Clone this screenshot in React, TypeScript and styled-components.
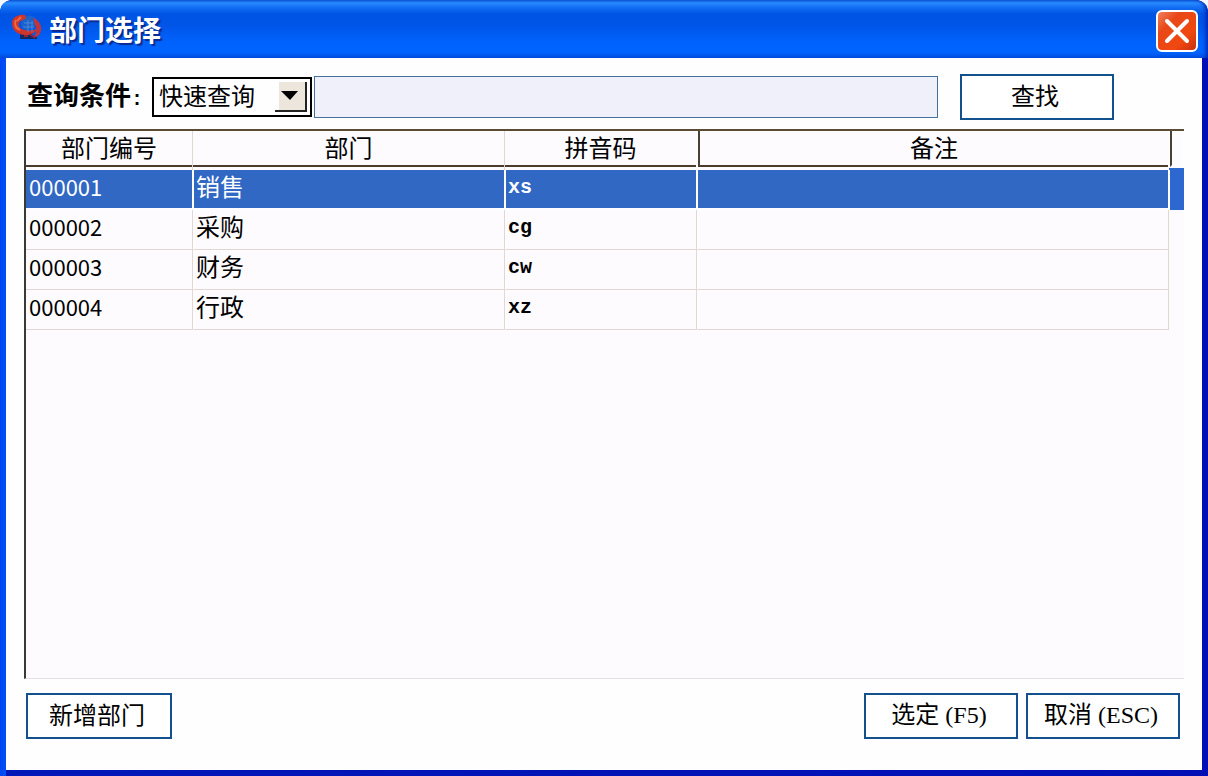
import React, { useState } from 'react';
import styled, { createGlobalStyle, css } from 'styled-components';

const sans = '"Noto Sans CJK SC", "Liberation Sans", sans-serif';
const mono = '"Liberation Mono", "Noto Sans CJK SC", monospace';
const serif = '"Liberation Serif", "Noto Sans CJK SC", serif';

const GlobalStyle = createGlobalStyle`
  *, *::before, *::after { box-sizing: border-box; }
  body { margin: 0; background: #f4f8ff; font-family: ${sans}; color: #000; }
  button, input, select { font: inherit; color: inherit; }
`;

const Dialog = styled.main`
  display: flex;
  flex-direction: column;
  min-height: 100vh;
  padding: 0 6px 6px;
  border-radius: 12px 12px 0 0;
  background: linear-gradient(to right, #0046f0 0, #0050fa 6px, #0018b8 6px, #0010b4 100%);
  overflow: hidden;
`;

const TitleBar = styled.header`
  display: flex;
  align-items: center;
  height: 58px;
  margin: 0 -6px;
  padding: 0 10px 0 11px;
  border-radius: 12px 12px 0 0;
  background: linear-gradient(
    to bottom,
    #0a5cdc 0,
    #2a8cff 3px,
    #1470f4 7px,
    #0054e4 14px,
    #0054e6 24px,
    #0062fc 42px,
    #0064ff 52px,
    #0050e0 58px
  );
  box-shadow: inset -4px 0 4px -2px #0020b0;
`;

const Title = styled.h1`
  flex: 1;
  margin: 0 0 0 7px;
  font-size: 28px;
  line-height: 40px;
  font-weight: 700;
  color: #fff;
  text-shadow: 2px 2px 1px #0a2a90;
`;

const CloseButton = styled.button`
  display: grid;
  place-items: center;
  width: 42px;
  height: 42px;
  margin-top: 4px;
  padding: 0;
  border: 2px solid #fff;
  border-radius: 6px;
  background: linear-gradient(135deg, #f08060 0, #e84818 30%, #f04810 70%, #c83010 100%);
`;

const Content = styled.div`
  display: flex;
  flex: 1;
  flex-direction: column;
  padding: 16px 18px 31px;
  background: #fefdff;
`;

const QueryBar = styled.form`
  display: flex;
  align-items: center;
  padding: 0 70px 0 3px;
`;

const QueryLabel = styled.label`
  flex: none;
  width: 125px;
  font-size: 26px;
  line-height: 40px;
  font-weight: 700;
  white-space: nowrap;
`;

const Colon = styled.span`
  font-family: ${mono};
  font-size: 20px;
`;

const SelectBox = styled.div`
  position: relative;
  flex: none;
  width: 160px;
  height: 40px;
`;

const Select = styled.select`
  width: 100%;
  height: 100%;
  padding: 0 36px 4px 5px;
  border: 2px solid #000;
  border-radius: 0;
  background: #fefdff;
  appearance: none;
  font-size: 24px;
  line-height: 32px;
`;

const SelectArrow = styled.span`
  position: absolute;
  top: 5px;
  right: 5px;
  display: grid;
  place-items: center;
  width: 32px;
  height: 30px;
  border-right: 2px solid #222;
  border-bottom: 2px solid #222;
  background: linear-gradient(to right, #fefdff 4px, #ece6dc 4px);
  pointer-events: none;
`;

const SearchInput = styled.input`
  flex: 1;
  min-width: 0;
  height: 42px;
  margin: 0 22px 0 2px;
  padding: 0 6px;
  border: 1px solid #44709c;
  border-radius: 0;
  background: #f0f0fa;
  font-size: 24px;
`;

const Button = styled.button<{ $width: number }>`
  flex: none;
  width: ${(p) => p.$width}px;
  height: 46px;
  padding: 0 4px 4px 0;
  border: 2px solid #12508e;
  border-radius: 0;
  background: #fff;
  font-size: 24px;
  line-height: 36px;
  white-space: nowrap;
`;

const KeyHint = styled.span`
  margin-left: 6px;
  font-family: ${serif};
`;

const GridFrame = styled.section`
  flex: 1;
  margin-top: 9px;
  border-top: 2px solid #5a4c34;
  border-left: 2px solid #3c3834;
  border-bottom: 1px solid #e4e0e2;
  background: #fdfbfe;
`;

const Grid = styled.table`
  width: 100%;
  table-layout: fixed;
  border-collapse: separate;
  border-spacing: 0;
`;

const Col = styled.col<{ $width?: number }>`
  width: ${(p) => (p.$width ? `${p.$width}px` : 'auto')};
`;

const HeadCell = styled.th<{ $divider?: boolean }>`
  height: 39px;
  padding: 0 0 3px;
  border-right: 1px solid #e2d6d2;
  font-size: 24px;
  font-weight: 400;
  vertical-align: top;
  ${(p) => p.$divider && css`padding-left: 1px;`}
  &:nth-child(n + 3) { border-right-color: #fefdff; }
`;

const HeadLabel = styled.div<{ $divider?: boolean; $last?: boolean }>`
  height: 36px;
  border-bottom: 2px solid ${(p) => (p.$last ? 'transparent' : '#4a3c2c')};
  line-height: 32px;
  ${(p) => p.$divider && css`border-left: 2px solid #4a4034;`}
`;

const Row = styled.tr<{ $selected: boolean }>`
  color: ${(p) => (p.$selected ? '#fff' : '#000')};
`;

const Cell = styled.td<{ $selected: boolean; $kind?: 'code' | 'pinyin' }>`
  height: 40px;
  padding: 0 3px;
  border-right: 1px solid #e2d6d2;
  border-bottom: 1px solid #e2d6d2;
  font-size: 24px;
  line-height: 32px;
  vertical-align: top;
  ${(p) => p.$kind === 'code' && css`font-size: 22px;`}
  ${(p) => p.$kind === 'pinyin' && css`
    padding-top: 2px;
    font-family: ${mono};
    font-size: 20px;
    font-weight: 700;
  `}
  ${(p) => p.$selected && css`
    border-right: 1px solid #fefdff;
    border-bottom: 2px solid #fefdff;
    background: #3068c4;
    & + & {
      padding-left: 2px;
      border-left: 1px solid #fefdff;
    }
  `}
`;

const EdgeCell = styled.td<{ $selected: boolean }>`
  padding: 0;
  ${(p) => p.$selected && css`
    border-left: 1px solid #fefdff;
    background: #2c68d0;
    box-shadow: 0 -2px #2c68d0;
  `}
`;

const Footer = styled.footer`
  display: flex;
  gap: 8px;
  margin-top: 14px;
  padding: 0 4px 0 2px;
`;

const Spacer = styled.span`
  flex: 1;
`;

const departments = [
  { code: '000001', name: '销售', pinyin: 'xs', note: '' },
  { code: '000002', name: '采购', pinyin: 'cg', note: '' },
  { code: '000003', name: '财务', pinyin: 'cw', note: '' },
  { code: '000004', name: '行政', pinyin: 'xz', note: '' },
];

function AppLogo() {
  return (
    <svg width="31" height="30" viewBox="0 0 31 30" aria-hidden="true">
      <path d="M9 19h10v3h7v3H9z" fill="#14285c" />
      <path d="M11 4c4-4 12-3 15 2l-2 6-9 5-5-6z" fill="#1c62c8" />
      <path
        d="M14 1C6 0 1 4 1 9c0 8 6 12 14 12 5 0 9-2 11-6-5 2-14 2-17-1-3-4-1-8 6-9z"
        fill="#d0352c"
      />
      <path d="M5 6c-2 3-1 8 4 10M10 3L6 7" stroke="#f0683c" strokeWidth="2" fill="none" />
      <path d="M22 4c6 2 9 7 8 13-1 4-4 6-7 7 2-4 3-9 1-13z" fill="#c0343c" />
      <path d="M13 9h9M12 13h11M17 6v12M21 7v11" stroke="#4a86d8" strokeWidth="1" fill="none" />
      <path d="M13 22h4M19 20l5 4" stroke="#8c2440" strokeWidth="2" />
    </svg>
  );
}

export default function App() {
  const [selected, setSelected] = useState('000001');
  return (
    <>
      <GlobalStyle />
      <Dialog>
        <TitleBar>
          <AppLogo />
          <Title>部门选择</Title>
          <CloseButton type="button" aria-label="关闭">
            <svg width="26" height="26" viewBox="0 0 26 26" aria-hidden="true">
              <path d="M3 3L23 23M23 3L3 23" stroke="#fff" strokeWidth="4" strokeLinecap="round" />
            </svg>
          </CloseButton>
        </TitleBar>
        <Content>
          <QueryBar onSubmit={(e) => e.preventDefault()}>
            <QueryLabel htmlFor="query-kind">
              查询条件<Colon>:</Colon>
            </QueryLabel>
            <SelectBox>
              <Select id="query-kind">
                <option>快速查询</option>
              </Select>
              <SelectArrow>
                <svg width="18" height="10" viewBox="0 0 18 10" aria-hidden="true">
                  <path d="M0 0h17L9 9z" fill="#000" />
                </svg>
              </SelectArrow>
            </SelectBox>
            <SearchInput type="text" aria-label="查询内容" />
            <Button $width={154} type="submit">查找</Button>
          </QueryBar>
          <GridFrame>
            <Grid>
              <colgroup>
                <Col $width={167} />
                <Col $width={312} />
                <Col $width={192} />
                <Col />
                <Col $width={15} />
              </colgroup>
              <thead>
                <tr>
                  <HeadCell><HeadLabel>部门编号</HeadLabel></HeadCell>
                  <HeadCell><HeadLabel>部门</HeadLabel></HeadCell>
                  <HeadCell><HeadLabel>拼音码</HeadLabel></HeadCell>
                  <HeadCell $divider><HeadLabel $divider>备注</HeadLabel></HeadCell>
                  <HeadCell $divider><HeadLabel $divider $last /></HeadCell>
                </tr>
              </thead>
              <tbody>
                {departments.map((d) => {
                  const on = d.code === selected;
                  return (
                    <Row key={d.code} $selected={on} aria-selected={on} onClick={() => setSelected(d.code)}>
                      <Cell $selected={on} $kind="code">{d.code}</Cell>
                      <Cell $selected={on}>{d.name}</Cell>
                      <Cell $selected={on} $kind="pinyin">{d.pinyin}</Cell>
                      <Cell $selected={on}>{d.note}</Cell>
                      <EdgeCell $selected={on} />
                    </Row>
                  );
                })}
              </tbody>
            </Grid>
          </GridFrame>
          <Footer>
            <Button $width={146} type="button">新增部门</Button>
            <Spacer />
            <Button $width={154} type="button">选定<KeyHint>(F5)</KeyHint></Button>
            <Button $width={154} type="button">取消<KeyHint>(ESC)</KeyHint></Button>
          </Footer>
        </Content>
      </Dialog>
    </>
  );
}
